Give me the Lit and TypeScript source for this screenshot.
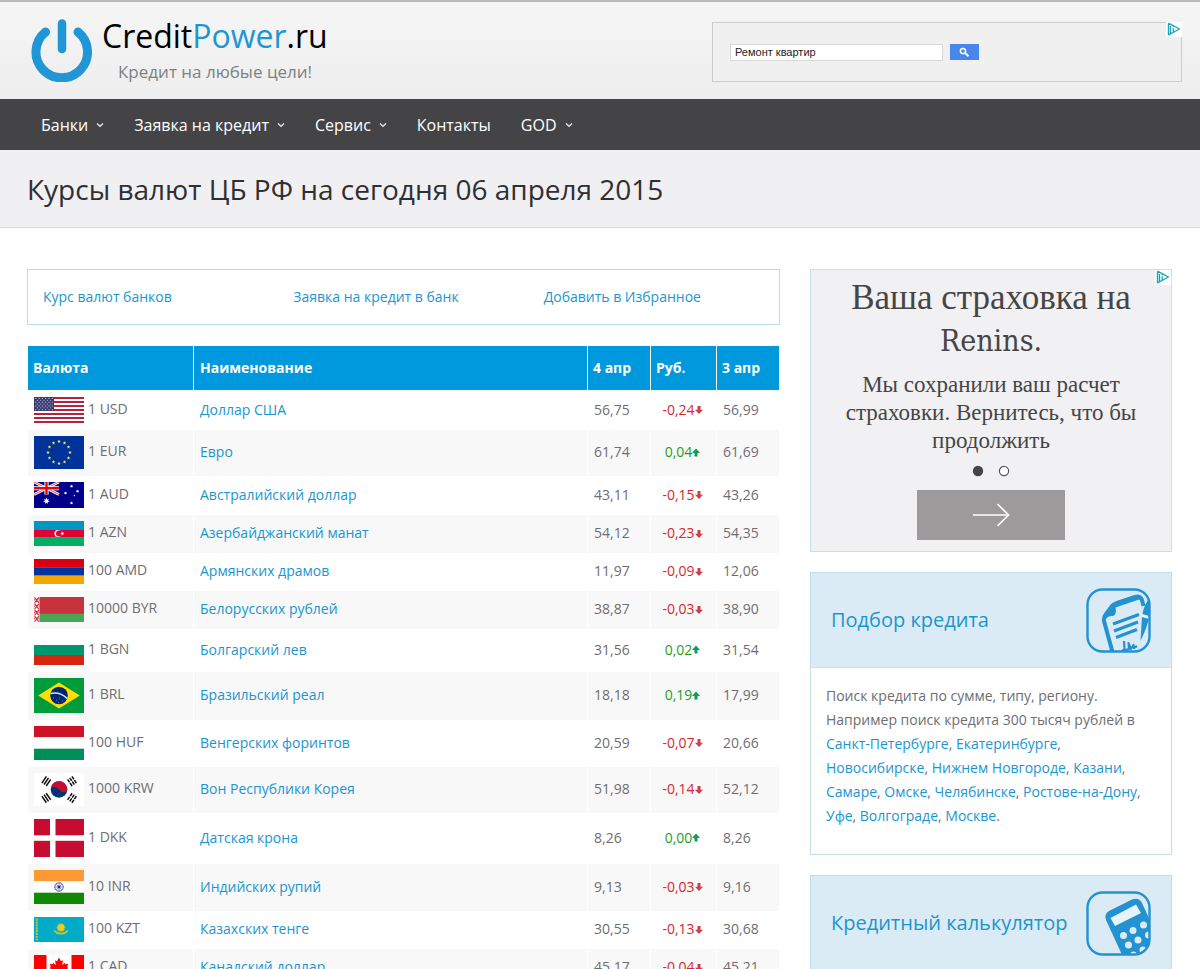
import { LitElement, html, svg, css } from "lit";
import { customElement } from "lit/decorators.js";

type Rate = {
  unit: string;
  name: string;
  now: string;
  diff: string;
  up?: boolean;
  prev: string;
  h: number;
  flag: unknown;
};

const bar = (y: number, h: number, fill: string) =>
  svg`<rect x="0" y=${y} width="50" height=${h} fill=${fill}></rect>`;

const star = (cx: number, cy: number, r: number, fill: string, points = 5) => {
  const pts: string[] = [];
  for (let i = 0; i < points * 2; i++) {
    const a = (Math.PI * i) / points - Math.PI / 2;
    const q = i % 2 ? r * 0.45 : r;
    pts.push(`${(cx + q * Math.cos(a)).toFixed(2)},${(cy + q * Math.sin(a)).toFixed(2)}`);
  }
  return svg`<polygon points=${pts.join(" ")} fill=${fill}></polygon>`;
};

const range = (n: number) => Array.from({ length: n }, (_, i) => i);

const usa = svg`
  ${bar(0, 26, "#fff")}
  ${range(7).map((i) => bar(i * 4, 2, "#b3233f"))}
  <rect width="20" height="14" fill="#3c3b6e"></rect>
  ${range(7).map((r) =>
    range(r % 2 ? 5 : 6).map(
      (c) => svg`<circle cx=${1.8 + c * 3.3 + (r % 2 ? 1.6 : 0)} cy=${1.4 + r * 1.87} r="0.6" fill="#c3c3de"></circle>`
    )
  )}`;

const eu = svg`
  ${bar(0, 33, "#039")}
  ${range(12).map((i) =>
    star(25 + 11 * Math.sin((i * Math.PI) / 6), 16.5 - 11 * Math.cos((i * Math.PI) / 6), 1.8, "#f5e56b")
  )}`;

const australia = svg`
  ${bar(0, 26, "#00008b")}
  <path d="M0 0 25 12.5M25 0 0 12.5" stroke="#fff" stroke-width="2.6"></path>
  <path d="M0 0 25 12.5M25 0 0 12.5" stroke="#e33" stroke-width="0.9"></path>
  <path d="M12.5 0V12.5M0 6.25H25" stroke="#fff" stroke-width="4.2"></path>
  <path d="M12.5 0V12.5M0 6.25H25" stroke="#e00" stroke-width="2.4"></path>
  ${star(12.5, 19, 3.4, "#fff", 7)}
  ${star(37.5, 4.2, 1.8, "#fff", 7)}${star(31.5, 11, 1.8, "#fff", 7)}
  ${star(43.5, 9.2, 1.8, "#fff", 7)}${star(37.5, 21, 1.8, "#fff", 7)}${star(40.4, 13.6, 1.1, "#fff")}`;

const azerbaijan = svg`
  ${bar(0, 8.4, "#0098c3")}${bar(8.3, 8.4, "#e00034")}${bar(16.6, 8.4, "#00ae65")}
  <circle cx="24" cy="12.5" r="3.6" fill="#fff"></circle>
  <circle cx="25" cy="12.5" r="3" fill="#e00034"></circle>
  ${star(28.3, 12.5, 2, "#fff", 8)}`;

const armenia = svg`${bar(0, 8.4, "#d90012")}${bar(8.3, 8.4, "#0033a0")}${bar(16.6, 8.4, "#f2a800")}`;

const belarus = svg`
  ${bar(0, 17, "#c8313e")}${bar(16.7, 8.3, "#4aa657")}
  <rect width="5.5" height="25" fill="#fff"></rect>
  ${range(4).map(
    (i) => svg`<path transform="translate(0 ${i * 6.25})" d="M0.5 0.5 2.7 3 5 0.5M0.5 5.8 2.7 3.3 5 5.8M0 3H1M4.5 3H5.5" fill="none" stroke="#c8313e" stroke-width="1.2"></path>`
  )}`;

const bulgaria = svg`${bar(0, 10, "#fff")}${bar(10, 10, "#00966e")}${bar(20, 10, "#d62612")}`;

const brazil = svg`
  ${bar(0, 35, "#009b3a")}
  <path d="M4.2 17.5 25 4.4 45.8 17.5 25 30.6Z" fill="#fedf00"></path>
  <circle cx="25" cy="17.5" r="8.8" fill="#002776"></circle>
  <path d="M16.6 15.5Q26 13.5 33.2 20.6" fill="none" stroke="#cfe0ee" stroke-width="1.5"></path>
  <path d="M19 20h1M22 22h1M25 20h1M28 23h1M24 24.5h1" stroke="#7f95c4" stroke-width="0.8"></path>`;

const hungary = svg`${bar(0, 11.3, "#cd1126")}${bar(11.3, 11.4, "#fff")}${bar(22.7, 11.3, "#008d57")}`;

const trigram = (x: number, y: number, angle: number, broken: boolean) => svg`
  <g transform="translate(${x} ${y}) rotate(${angle})" stroke="#111" stroke-width="1.5">
    <path d="M-4 -2.6H4M-4 0H4M-4 2.6H4"></path>
    ${broken ? svg`<path d="M0 -4V4" stroke="#fff" stroke-width="0.9"></path>` : ""}
  </g>`;

const korea = svg`
  ${bar(0, 33, "#fff")}
  <circle cx="25" cy="16.5" r="8.3" fill="#003478"></circle>
  <path d="M17.2 13.7A8.3 8.3 0 0 1 33.3 16.5Q32.6 19.5 29.6 19.2Q27 19 25 16.5Q22.8 14 20.4 14Q18 14 16.8 16Z" fill="#c60c30"></path>
  ${trigram(12.3, 8.2, -56, false)}${trigram(38, 8.2, 56, true)}
  ${trigram(12.3, 25, 56, false)}${trigram(38, 25, -56, true)}`;

const denmark = svg`${bar(0, 38, "#c60c30")}
  <rect x="16" width="5.5" height="38" fill="#fff"></rect>${bar(16.3, 5.5, "#fff")}`;

const india = svg`
  ${bar(0, 11.3, "#f93")}${bar(11.3, 11.4, "#fff")}${bar(22.7, 11.3, "#128807")}
  <circle cx="25" cy="17" r="4.2" fill="none" stroke="#3a3a9c" stroke-width="0.9"></circle>
  <path d="M21.5 17H28.5M25 13.5V20.5M22.5 14.5 27.5 19.5M27.5 14.5 22.5 19.5" stroke="#3a3a9c" stroke-width="0.5"></path>
  <circle cx="25" cy="17" r="1.4" fill="#22228c"></circle>`;

const kazakhstan = svg`
  ${bar(0, 25, "#00abc8")}
  <path d="M2.8 1.5V23.5" stroke="#b9c63a" stroke-width="2" stroke-dasharray="2.2 0.7"></path>
  ${star(27, 10.5, 5.2, "#d9d72a", 16)}
  <circle cx="27" cy="10.5" r="3.5" fill="#f2c91d"></circle>
  <path d="M19.5 12.5Q21 18 27 17.5Q33 18 34.5 12.5Q30.5 15.5 27 15.8Q23.5 15.5 19.5 12.5Z" fill="#b9c63a"></path>`;

const canada = svg`
  ${bar(0, 25, "#fff")}
  <rect width="12.5" height="25" fill="#f00"></rect><rect x="37.5" width="12.5" height="25" fill="#f00"></rect>
  <path d="M25 2.5 27 6.3 29 5.3 28.1 10.2 30.6 7.7 31.2 9.3 34.2 8.8 33.2 12 34.3 12.9 29.3 17.2 29.8 19 25.4 18.4V22.5H24.6V18.4L20.2 19 20.7 17.2 15.7 12.9 16.8 12 15.8 8.8 18.8 9.3 19.4 7.7 21.9 10.2 21 5.3 23 6.3Z" fill="#f00"></path>`;

const RATES: Rate[] = [
  { unit: "1 USD", name: "Доллар США", now: "56,75", diff: "-0,24", prev: "56,99", h: 26, flag: usa },
  { unit: "1 EUR", name: "Евро", now: "61,74", diff: "0,04", up: true, prev: "61,69", h: 33, flag: eu },
  { unit: "1 AUD", name: "Австралийский доллар", now: "43,11", diff: "-0,15", prev: "43,26", h: 26, flag: australia },
  { unit: "1 AZN", name: "Азербайджанский манат", now: "54,12", diff: "-0,23", prev: "54,35", h: 25, flag: azerbaijan },
  { unit: "100 AMD", name: "Армянских драмов", now: "11,97", diff: "-0,09", prev: "12,06", h: 25, flag: armenia },
  { unit: "10000 BYR", name: "Белорусских рублей", now: "38,87", diff: "-0,03", prev: "38,90", h: 25, flag: belarus },
  { unit: "1 BGN", name: "Болгарский лев", now: "31,56", diff: "0,02", up: true, prev: "31,54", h: 30, flag: bulgaria },
  { unit: "1 BRL", name: "Бразильский реал", now: "18,18", diff: "0,19", up: true, prev: "17,99", h: 35, flag: brazil },
  { unit: "100 HUF", name: "Венгерских форинтов", now: "20,59", diff: "-0,07", prev: "20,66", h: 34, flag: hungary },
  { unit: "1000 KRW", name: "Вон Республики Корея", now: "51,98", diff: "-0,14", prev: "52,12", h: 33, flag: korea },
  { unit: "1 DKK", name: "Датская крона", now: "8,26", diff: "0,00", up: true, prev: "8,26", h: 38, flag: denmark },
  { unit: "10 INR", name: "Индийских рупий", now: "9,13", diff: "-0,03", prev: "9,16", h: 34, flag: india },
  { unit: "100 KZT", name: "Казахских тенге", now: "30,55", diff: "-0,13", prev: "30,68", h: 25, flag: kazakhstan },
  { unit: "1 CAD", name: "Канадский доллар", now: "45,17", diff: "-0,04", prev: "45,21", h: 25, flag: canada },
];

const MENU = [
  { label: "Банки", sub: true },
  { label: "Заявка на кредит", sub: true },
  { label: "Сервис", sub: true },
  { label: "Контакты", sub: false },
  { label: "GOD", sub: true },
];

const CITIES = [
  "Санкт-Петербурге", "Екатеринбурге", "Новосибирске", "Нижнем Новгороде", "Казани", "Самаре",
  "Омске", "Челябинске", "Ростове-на-Дону", "Уфе", "Волгограде", "Москве",
];

const adChoices = html`<svg width="14" height="14" viewBox="0 0 14 14" aria-hidden="true">
  <path d="M1.5 1.2V12.8L3.5 11.8V10.5M1.5 1.2 12.5 7 6 10.5 3.5 11.8M3.5 10.5V4" fill="none" stroke="#1fa5b8" stroke-width="1.4" stroke-linejoin="round"></path>
  <path d="M6.3 6.2V10M6.3 4V5.2" stroke="#1fa5b8" stroke-width="1.3"></path>
</svg>`;

@customElement("app-root")
export class AppRoot extends LitElement {
  static styles = css`
    :host {
      display: block;
      background: #fff;
      color: #6e6e72;
      font: 14px/24px "Open Sans", "Noto Sans", sans-serif;
    }
    * { box-sizing: border-box; }
    a { color: #1a96cf; text-decoration: none; }
    svg { display: block; flex: none; }
    h1, h2, p, ul { margin: 0; padding: 0; font-weight: 400; }

    .top {
      display: flex;
      justify-content: space-between;
      align-items: flex-start;
      height: 99px;
      padding: 0 18px 0 31px;
      border-top: 2px solid #b8b8ba;
      background: linear-gradient(#f5f5f5, #eeeeee);
    }
    .brand { display: flex; gap: 10px; padding-top: 16px; color: #000; }
    .brand-name { display: block; font-size: 32px; line-height: 36px; }
    .brand-name span { color: #1c97d4; }
    .slogan { display: block; padding-left: 16px; margin-top: 6px; font-size: 17px; line-height: 24px; color: #808083; }
    .search {
      position: relative;
      display: flex;
      align-items: center;
      gap: 7px;
      width: 470px;
      height: 60px;
      margin-top: 20px;
      padding-left: 17px;
      border: 1px solid #cbcbcb;
      background: #f0f0f0;
    }
    .search input {
      width: 213px;
      height: 17px;
      padding: 0 4px;
      border: 1px solid #d8d8d8;
      border-radius: 0;
      background: #fff;
      color: #222;
      font: 11px/15px "Liberation Sans", Arial, sans-serif;
    }
    .search button {
      display: grid;
      place-items: center;
      width: 29px;
      height: 16px;
      padding: 0;
      border: 0;
      background: #4787ed;
    }
    .mark { position: absolute; top: 0; right: 0; padding: 0 1px 1px; border-radius: 0 0 0 4px; background: #fff; }
    .search .mark { top: -1px; right: -1px; }

    .menu { background: #444446; }
    .menu ul { display: flex; list-style: none; padding: 0 26px; }
    .menu a {
      display: flex;
      align-items: center;
      gap: 8px;
      height: 51px;
      padding: 0 15px;
      color: #fff;
      font-size: 16px;
    }

    .title { padding: 21px 27px 19px; border-bottom: 1px solid #d8d8db; background: #f0f0f2; }
    .title h1 { font-size: 28px; line-height: 37px; color: #2f2f33; }

    .content {
      display: grid;
      grid-template-columns: minmax(0, 1fr) 362px;
      gap: 30px;
      align-items: start;
      padding: 41px 28px 0 27px;
    }
    .links {
      display: grid;
      grid-template-columns: repeat(3, 1fr);
      padding: 15px 0;
      margin-bottom: 21px;
      border: 1px solid #b9dfe8;
    }
    .links a { padding-left: 15px; }

    .rates { width: 100%; table-layout: fixed; border-spacing: 0; padding: 0 1px; }
    .rates th, .rates td { padding: 0 0 2px 6px; border-right: 1px solid #fff; text-align: left; }
    .rates th:last-child, .rates td:last-child { border-right: 0; }
    .rates th { height: 45px; padding: 0 0 0 5px; background: #0099de; color: #fff; font-weight: 700; border-bottom: 1px solid #fff; }
    .rates th:nth-child(2) { padding-left: 6px; }
    .rates tbody tr:nth-child(even) { background: #f8f8f8; }
    .rates td:first-child { padding: 6px 0 7px 6px; line-height: 16px; white-space: nowrap; }
    .rates td.diff { padding: 0 2px 2px 0; text-align: center; }
    .c-unit { width: 166px; }
    .c-now { width: 63px; }
    .c-diff { width: 66px; }
    .c-prev { width: 62px; }
    .unit { display: flex; align-items: center; gap: 4px; }
    .unit span { padding-bottom: 3px; }
    .change { display: inline-flex; align-items: center; color: #d9252d; }
    .change.up { color: #1f9d1f; }

    .side { display: grid; gap: 20px; }
    .ad {
      position: relative;
      display: flex;
      flex-direction: column;
      align-items: center;
      padding: 7px 24px 11px;
      border: 1px solid #c3e2ea;
      background: #f1f0f2;
      color: #454547;
      font-family: "Liberation Serif", serif;
      text-align: center;
    }
    .ad h2 { font-size: 35px; line-height: 42px; }
    .ad .latin { font-family: "DejaVu Serif Condensed", "DejaVu Serif", serif; font-size: 30px; }
    .ad p { margin-top: 9px; font-size: 23px; line-height: 28px; }
    .dots { margin-top: 10px; }
    .go {
      display: grid;
      place-items: center;
      width: 148px;
      height: 50px;
      margin-top: 13px;
      padding: 0;
      border: 0;
      background: #9c9a9b;
    }

    .card { border: 1px solid #bfdfe9; }
    .card-head {
      display: flex;
      align-items: center;
      justify-content: space-between;
      height: 95px;
      padding: 0 20px;
      background: #daebf6;
      border-bottom: 1px solid #c3e2ea;
    }
    .card-head a { font-size: 20px; line-height: 28px; }
    .card-text { padding: 16px 15px 26px; }
  `;

  private menu() {
    return html`<nav class="menu">
      <ul>
        ${MENU.map(
          (m) => html`<li>
            <a href="#">${m.label}${m.sub
              ? html`<svg width="8" height="6" viewBox="0 0 8 6" aria-hidden="true"><path d="M1 1.5 4 4.3 7 1.5" fill="none" stroke="#e4e4e4" stroke-width="1.4"></path></svg>`
              : ""}</a>
          </li>`
        )}
      </ul>
    </nav>`;
  }

  private row(r: Rate) {
    return html`<tr>
      <td>
        <div class="unit">
          <svg width="50" height=${r.h} viewBox="0 0 50 ${r.h}" aria-hidden="true">${r.flag}</svg>
          <span>${r.unit}</span>
        </div>
      </td>
      <td><a href="#">${r.name}</a></td>
      <td>${r.now}</td>
      <td class="diff">
        <span class="change ${r.up ? "up" : ""}">${r.diff}<svg width="8" height="9" viewBox="0 0 8 9" aria-hidden="true">
            ${r.up
              ? svg`<path d="M4 0.5 8 5H5.5V8.5H2.5V5H0Z" fill="#129a5c"></path>`
              : svg`<path d="M4 9 8 4.8H5.5V1H2.5V4.8H0Z" fill="#cf3f47"></path>`}
          </svg></span>
      </td>
      <td>${r.prev}</td>
    </tr>`;
  }

  render() {
    return html`
      <header class="top">
        <a class="brand" href="#">
          <svg width="61" height="64" viewBox="0 0 61 64" aria-hidden="true">
            <path d="M14.5 14A25.8 25.8 0 1 0 47 14" fill="none" stroke="#2196d6" stroke-width="9" stroke-linecap="round"></path>
            <path d="M31 5.5V31" stroke="#2196d6" stroke-width="8.5" stroke-linecap="round"></path>
          </svg>
          <span>
            <span class="brand-name">Credit<span>Power</span>.ru</span>
            <span class="slogan">Кредит на любые цели!</span>
          </span>
        </a>
        <form class="search" @submit=${(e: Event) => e.preventDefault()}>
          <input type="text" aria-label="Поиск" value="Ремонт квартир" />
          <button type="submit" aria-label="Найти">
            <svg width="11" height="11" viewBox="0 0 11 11" aria-hidden="true">
              <circle cx="4" cy="4" r="2.6" fill="none" stroke="#fff" stroke-width="1.5"></circle>
              <path d="M6 6 9.5 9.2" stroke="#fff" stroke-width="2"></path>
            </svg>
          </button>
          <span class="mark">${adChoices}</span>
        </form>
      </header>
      ${this.menu()}
      <div class="title"><h1>Курсы валют ЦБ РФ на сегодня 06 апреля 2015</h1></div>
      <div class="content">
        <main>
          <nav class="links">
            <a href="#">Курс валют банков</a>
            <a href="#">Заявка на кредит в банк</a>
            <a href="#">Добавить в Избранное</a>
          </nav>
          <table class="rates">
            <colgroup>
              <col class="c-unit" /><col /><col class="c-now" /><col class="c-diff" /><col class="c-prev" />
            </colgroup>
            <thead>
              <tr><th>Валюта</th><th>Наименование</th><th>4 апр</th><th>Руб.</th><th>3 апр</th></tr>
            </thead>
            <tbody>${RATES.map((r) => this.row(r))}</tbody>
          </table>
        </main>
        <aside class="side">
          <section class="ad">
            <span class="mark">${adChoices}</span>
            <h2>Ваша страховка на <span class="latin">Renins.</span></h2>
            <p>Мы сохранили ваш расчет страховки. Вернитесь, что бы продолжить</p>
            <svg class="dots" width="38" height="12" viewBox="0 0 38 12" aria-hidden="true">
              <circle cx="6" cy="6" r="5.2" fill="#454547"></circle>
              <circle cx="32" cy="6" r="4.6" fill="#fff" stroke="#555" stroke-width="1.2"></circle>
            </svg>
            <button class="go" type="button" aria-label="Продолжить">
              <svg width="38" height="24" viewBox="0 0 38 24" fill="none" stroke="#fff" stroke-width="1.7" aria-hidden="true">
                <path d="M1 12H36.5M25.5 1 36.5 12 25.5 23"></path>
              </svg>
            </button>
          </section>
          <section class="card">
            <h2 class="card-head">
              <a href="#">Подбор кредита</a>
              <svg width="65" height="65" viewBox="0 0 65 65" aria-hidden="true">
                <clipPath id="doc-clip"><rect x="1" y="1" width="63" height="63" rx="15"></rect></clipPath>
                <g clip-path="url(#doc-clip)">
                  <path d="M26.5 64 18 33Q17.5 29 20 26L26 18Q28 16 31 15L49 9Q54 7.5 56 12L57.5 18" fill="none" stroke="#2292d0" stroke-width="4"></path>
                  <path d="M16 32 26 16 50 7 56 11 53 11.5 29.5 19.5Q31 27 27 28 20 27 18 35Z" fill="#2292d0"></path>
                  <path d="M27 36 53 26.5M28 43 52 34M30 49.5 51 41.5" stroke="#2292d0" stroke-width="3"></path>
                  <path d="M65 8Q58 16 56.5 26L65 28.5Z" fill="#2292d0"></path>
                  <path d="M56 29 63 31Q60 42 54.5 53Z" fill="#2292d0"></path>
                  <path d="M56 27.8 64 30" stroke="#eef7fc" stroke-width="1.6"></path>
                  <path d="M38 53 38.5 61 36 63 43 61 42.5 55 45 61 47.5 57 48 60 51 58" fill="none" stroke="#2292d0" stroke-width="2.2" stroke-linejoin="round"></path>
                </g>
                <rect x="1.5" y="1.5" width="62" height="62" rx="15" fill="none" stroke="#2292d0" stroke-width="2.4"></rect>
              </svg>
            </h2>
            <p class="card-text">
              Поиск кредита по сумме, типу, региону. Например поиск кредита 300 тысяч рублей в
              ${CITIES.map((c, i) => html`<a href="#">${c}</a>${i < CITIES.length - 1 ? ", " : "."}`)}
            </p>
          </section>
          <section class="card">
            <h2 class="card-head">
              <a href="#">Кредитный калькулятор</a>
              <svg width="65" height="65" viewBox="0 0 65 65" aria-hidden="true">
                <clipPath id="calc-clip"><rect x="1" y="1" width="63" height="63" rx="15"></rect></clipPath>
                <g clip-path="url(#calc-clip)">
                  <path d="M37 66 20 29Q18 23 23 20L46 8.5Q53 6 56 12L66 34V66Z" fill="#2292d0"></path>
                  <path d="M24.5 27 50 13.5 55 22 29 35Z" fill="#e6f3fa"></path>
                  <g fill="#daebf6">
                    <circle cx="37.5" cy="44.5" r="3.5"></circle><circle cx="47" cy="39.5" r="3.5"></circle><circle cx="57.5" cy="34" r="3.5"></circle>
                    <circle cx="42.5" cy="54" r="3.5"></circle><circle cx="52" cy="49" r="3.5"></circle><circle cx="62.5" cy="44" r="3.5"></circle>
                    <circle cx="47.5" cy="64" r="3.5"></circle><circle cx="57" cy="59" r="3.5"></circle>
                  </g>
                </g>
                <rect x="1.5" y="1.5" width="62" height="62" rx="15" fill="none" stroke="#2292d0" stroke-width="2.4"></rect>
              </svg>
            </h2>
          </section>
        </aside>
      </div>
    `;
  }
}
